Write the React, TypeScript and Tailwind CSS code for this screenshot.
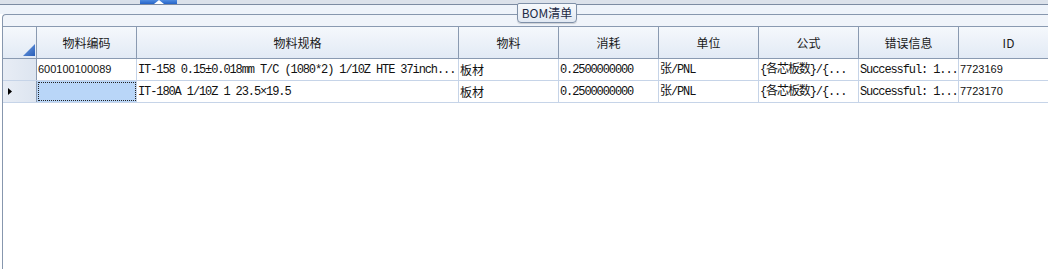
import React from "react";

const cjk = "font-['Noto_Sans_CJK_SC',sans-serif]";
const mono = "font-['Liberation_Mono','Noto_Sans_CJK_SC',monospace] text-[12px] tracking-[-1.1px]";
const sans = "font-['Liberation_Sans','Noto_Sans_CJK_SC',sans-serif] text-[11px]";

const cols = [
  { title: "物料编码", w: "w-[100px]" },
  { title: "物料规格", w: "w-[322px]" },
  { title: "物料", w: "w-[100px]" },
  { title: "消耗", w: "w-[100px]" },
  { title: "单位", w: "w-[100px]" },
  { title: "公式", w: "w-[100px]" },
  { title: "错误信息", w: "w-[100px]" },
  { title: "ID", w: "w-[100px]" },
];

type Cell = { text: string; cls: string };
const rows: Cell[][] = [
  [
    { text: "600100100089", cls: sans },
    { text: "IT-158 0.15±0.018mm T/C (1080*2) 1/10Z HTE 37inch...", cls: mono },
    { text: "板材", cls: cjk + " text-[12px]" },
    { text: "0.2500000000", cls: mono },
    { text: "张/PNL", cls: mono },
    { text: "{各芯板数}/{...", cls: mono },
    { text: "Successful: 1...", cls: mono },
    { text: "7723169", cls: sans },
  ],
  [
    { text: "", cls: sans },
    { text: "IT-180A 1/10Z 1 23.5×19.5", cls: mono },
    { text: "板材", cls: cjk + " text-[12px]" },
    { text: "0.2500000000", cls: mono },
    { text: "张/PNL", cls: mono },
    { text: "{各芯板数}/{...", cls: mono },
    { text: "Successful: 1...", cls: mono },
    { text: "7723170", cls: sans },
  ],
];

export default function App() {
  return (
    <div className="w-[1048px] h-[269px] overflow-hidden bg-white text-[#111]">
      {/* top strip */}
      <div className="h-[5px] flex bg-[#dbe1ea] border-b border-[#7c8ba2]">
        <div className="ml-[140px] w-[37px] h-[4px] bg-gradient-to-b from-[#4f8be0] to-[#2563c8] flex justify-center items-end">
          <svg width="10" height="4" viewBox="0 0 10 4">
            <polygon points="0,4 5,0 10,4" fill="#ffffff" />
          </svg>
        </div>
      </div>
      <div className="h-[9px] bg-[#eef3fa]" />
      {/* group box */}
      <div className="relative ml-[2px] h-[255px] border-l border-t border-[#8797ae] rounded-tl-[4px] bg-[#f0f4fa] flex flex-col">
        <div className="absolute left-[514px] top-[-12px] w-[60px] h-[20px] border border-[#7f90a8] rounded-b-[4px] rounded-t-[2px] bg-gradient-to-b from-[#f7f9fc] to-[#e2e9f3] flex items-center justify-center shadow-[0_1px_1px_rgba(0,0,0,0.15)]">
          <span className={cjk + " text-[12px] leading-none text-[#1c2a44]"}>BOM清单</span>
        </div>
        <div className="h-[11px]" />
        <div className="flex-1 bg-white border-t border-[#8a9ab1] flex flex-col">
          {/* header */}
          <div className="h-[32px] flex border-b border-[#8a9ab1] bg-gradient-to-b from-[#f5f8fc] to-[#e2eaf5]">
            <div className="w-[34px] shrink-0 border-r border-[#8a9ab1] flex items-end justify-end pr-[1px] pb-[2px]">
              <svg width="12" height="12" viewBox="0 0 12 12">
                <defs>
                  <linearGradient id="tg" x1="0" y1="0" x2="1" y2="1">
                    <stop offset="0" stopColor="#6fa0e6" />
                    <stop offset="1" stopColor="#2b5fb8" />
                  </linearGradient>
                </defs>
                <polygon points="12,0 12,12 0,12" fill="url(#tg)" />
              </svg>
            </div>
            {cols.map((c) => (
              <div
                key={c.title}
                className={`${c.w} shrink-0 border-r border-[#8a9ab1] flex items-center justify-center pt-[1px]`}
              >
                <span className={cjk + " text-[12px] text-[#1a1a1a]"}>{c.title}</span>
              </div>
            ))}
          </div>
          {/* rows */}
          {rows.map((r, ri) => (
            <div key={ri} className="h-[22px] flex border-b border-[#c6d4e8]">
              <div className="w-[34px] shrink-0 border-r border-[#8a9ab1] bg-gradient-to-r from-[#e8edf5] to-[#dde5f0] flex items-center pl-[5px]">
                {ri === 1 && (
                  <svg width="4" height="7" viewBox="0 0 4 7">
                    <polygon points="0,0 4,3.5 0,7" fill="#000" />
                  </svg>
                )}
              </div>
              {r.map((cell, ci) => {
                const selected = ri === 1 && ci === 0;
                return (
                  <div
                    key={ci}
                    className={`${cols[ci].w} shrink-0 border-r border-[#c6d4e8] flex items-center overflow-hidden whitespace-nowrap ${
                      selected ? "bg-[#b9d6f8] outline-1 outline-dotted outline-[#222] outline-offset-[-2px]" : ""
                    }`}
                  >
                    <span className={`${cell.cls} pl-[1px] leading-none`}>{cell.text}</span>
                  </div>
                );
              })}
            </div>
          ))}
        </div>
      </div>
    </div>
  );
}
